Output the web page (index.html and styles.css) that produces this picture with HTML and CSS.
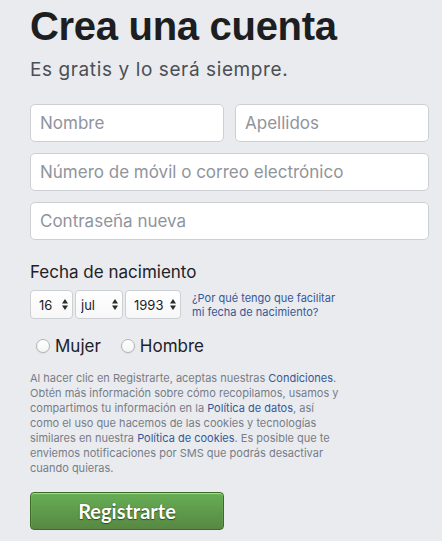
FILE: index.html
```html
<!DOCTYPE html>
<html lang="es">
<head>
<meta charset="utf-8">
<title>Crea una cuenta</title>
<link rel="stylesheet" href="styles.css">
</head>
<body>
<main class="signup">
  <h1 class="title">Crea una cuenta</h1>
  <p class="subtitle">Es gratis y lo será siempre.</p>
  <form class="form">
    <div class="row row-split">
      <input class="field" type="text" placeholder="Nombre">
      <input class="field" type="text" placeholder="Apellidos">
    </div>
    <div class="row">
      <input class="field" type="text" placeholder="Número de móvil o correo electrónico">
    </div>
    <div class="row">
      <input class="field" type="password" placeholder="Contraseña nueva">
    </div>

    <div class="label">Fecha de nacimiento</div>
    <div class="dob">
      <span class="sel sel-day">
        <select><option>16</option></select>
        <svg class="arrows" width="6" height="11" viewBox="0 0 6 11"><path d="M0 4.5 L3 0 L6 4.5Z M0 6.5 L3 11 L6 6.5Z"/></svg>
      </span>
      <span class="sel sel-month">
        <select><option>jul</option></select>
        <svg class="arrows" width="6" height="11" viewBox="0 0 6 11"><path d="M0 4.5 L3 0 L6 4.5Z M0 6.5 L3 11 L6 6.5Z"/></svg>
      </span>
      <span class="sel sel-year">
        <select><option>1993</option></select>
        <svg class="arrows" width="6" height="11" viewBox="0 0 6 11"><path d="M0 4.5 L3 0 L6 4.5Z M0 6.5 L3 11 L6 6.5Z"/></svg>
      </span>
      <a class="why" href="#">¿Por qué tengo que facilitar<br>mi fecha de nacimiento?</a>
    </div>

    <div class="gender">
      <label class="radio"><input type="radio" name="sex"><span>Mujer</span></label>
      <label class="radio"><input type="radio" name="sex"><span>Hombre</span></label>
    </div>

    <p class="terms">Al hacer clic en Registrarte, aceptas nuestras <a href="#">Condiciones</a>.<br>Obtén más información sobre cómo recopilamos, usamos y<br>compartimos tu información en la <a href="#">Política de datos</a>, así<br>como el uso que hacemos de las cookies y tecnologías<br>similares en nuestra <a href="#">Política de cookies</a>. Es posible que te<br>enviemos notificaciones por SMS que podrás desactivar<br>cuando quieras.</p>

    <button class="submit" type="button">Registrarte</button>
  </form>
</main>
</body>
</html>
```
FILE: styles.css
```css
html, body {
  margin: 0;
  padding: 0;
}
body {
  background: #e9ebee;
  font-family: Inter, "Liberation Sans", Arial, sans-serif;
  color: #1d2129;
}
.signup {
  width: 399px;
  padding-left: 30px;
}
.title {
  margin: 0;
  padding-top: 3px;
  font-family: "Liberation Sans", Arial, sans-serif;
  font-weight: 700;
  font-size: 40px;
  line-height: 46px;
  letter-spacing: -0.3px;
  color: #1c1e21;
}
.subtitle {
  margin: 9px 0 0;
  font-size: 19px;
  line-height: 24px;
  letter-spacing: 0.6px;
  color: #4b4f56;
}
.form {
  margin-top: 22px;
}
.row {
  display: flex;
  margin-bottom: 11px;
}
.row-split {
  gap: 11px;
}
.field {
  flex: 1;
  min-width: 0;
  box-sizing: border-box;
  height: 38px;
  margin: 0;
  padding: 0 9px;
  border: 1px solid #ccd0d5;
  border-radius: 5px;
  background: #fff;
  font-family: inherit;
  font-size: 17px;
  color: #1d2129;
  outline: none;
}
.field::placeholder {
  color: #90949c;
}
.label {
  margin-top: 22px;
  font-size: 17px;
  line-height: 20px;
  color: #1d2129;
}
.dob {
  display: flex;
  align-items: center;
  margin-top: 8px;
  height: 29px;
}
.sel {
  position: relative;
  display: block;
  margin-right: 2px;
}
.sel select {
  appearance: none;
  -webkit-appearance: none;
  box-sizing: border-box;
  height: 29px;
  margin: 0;
  padding: 0 0 0 8px;
  border: 1px solid #ccd0d5;
  border-radius: 4px;
  background: linear-gradient(#ffffff, #f7f7f8);
  font-family: inherit;
  font-size: 13px;
  color: #1d2129;
  outline: none;
}
.sel-day select { width: 43px; }
.sel-month select { width: 48px; padding-left: 5px; }
.sel-year select { width: 56px; }
.arrows {
  position: absolute;
  right: 5px;
  top: 9px;
  fill: #2b2b2b;
  pointer-events: none;
}
.why {
  margin-left: 9px;
  font-size: 11px;
  line-height: 14px;
  color: #365899;
  text-decoration: none;
}
.gender {
  display: flex;
  align-items: center;
  gap: 20px;
  height: 24px;
  margin-top: 15px;
  padding-left: 6px;
}
.radio {
  display: flex;
  align-items: center;
  gap: 5px;
  font-size: 17px;
  color: #1d2129;
}
.radio input {
  appearance: none;
  -webkit-appearance: none;
  box-sizing: border-box;
  width: 14px;
  height: 14px;
  margin: 0;
  border: 1px solid #b4b4b4;
  border-radius: 50%;
  background: linear-gradient(#ffffff, #f4f4f4);
  box-shadow: 0 0.5px 1px rgba(0, 0, 0, 0.12);
}
.terms {
  margin: 13px 0 0;
  font-size: 11px;
  line-height: 15px;
  color: #777d88;
}
.terms a {
  color: #365899;
  text-decoration: none;
}
.submit {
  display: block;
  box-sizing: border-box;
  width: 194px;
  height: 38px;
  margin-top: 16px;
  padding: 0;
  border: 1px solid #3b6e22;
  border-radius: 4px;
  background: linear-gradient(#67ae55, #578843);
  box-shadow: inset 0 1px 1px #a4e388;
  font-family: Lato, "Liberation Sans", sans-serif;
  font-weight: 700;
  font-size: 20px;
  color: #fff;
  text-shadow: 0 0 1px #2c5115, 0 1px 1px #2c5115;
  cursor: pointer;
}
```
